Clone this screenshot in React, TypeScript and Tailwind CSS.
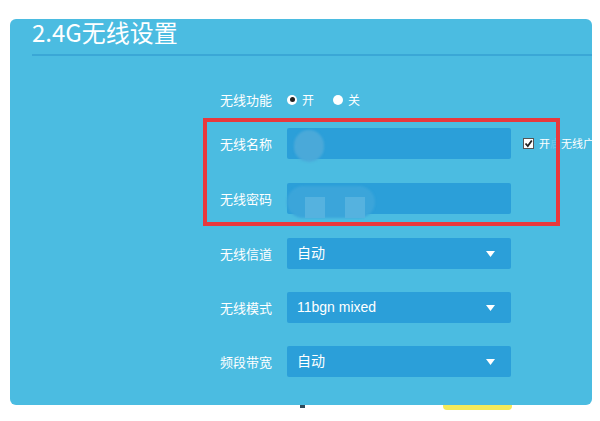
import { ReactNode } from "react"

const font = { fontFamily: '"Noto Sans CJK SC", "Noto Sans", sans-serif' }

function Row({ label, children, className = "" }: { label: string, children: ReactNode, className?: string }) {
    return (
        <div className={`flex items-center h-[31px] ${className}`}>
            <p className="w-[72px] text-right text-[13px] text-white shrink-0">{label}</p>
            <div className="ml-[15px] flex items-center">{children}</div>
        </div>
    )
}

function Select({ value }: { value: string }) {
    return (
        <div className="w-[224px] h-[31px] bg-[#2b9fd9] rounded-[2px] flex items-center justify-between pl-[10px] pr-[16px]">
            <span className="text-[14px] text-white" style={{ fontFamily: '"Liberation Sans", "Noto Sans CJK SC", sans-serif' }}>{value}</span>
            <svg width="9" height="6" viewBox="0 0 9 6"><path d="M0 0 H9 L4.5 6 Z" fill="#fff" /></svg>
        </div>
    )
}

export default function App() {
    return (
        <div className="w-[600px] h-[421px] bg-white relative overflow-hidden" style={font}>
            <div className="absolute left-[443px] top-[402px] w-[69px] h-[8px] rounded-sm bg-[#f4ea5a]"></div>
            <div className="absolute left-[300px] top-[402px] w-[5px] h-[6px] bg-[#2f4a5a]"></div>
            <div className="absolute left-[10px] top-[19px] w-[582px] h-[386px] rounded-[6px] bg-[#4bbce1]">
                <p className="ml-[22px] text-[24px] leading-[26px] text-white">2.4G无线设置</p>
                <div className="ml-[22px] mt-[9px] h-[2px] bg-[#3aa7d6]"></div>
                <div className="flex flex-col pl-[190px]">
                    <Row label="无线功能" className="mt-[28px]">
                        <div className="flex items-center gap-[5px] text-[12px] text-white">
                            <span className="w-[10px] h-[10px] rounded-full bg-white flex items-center justify-center">
                                <span className="w-[5px] h-[5px] rounded-full bg-[#222]"></span>
                            </span>
                            <span>开</span>
                            <span className="ml-[14px] w-[10px] h-[10px] rounded-full bg-white"></span>
                            <span>关</span>
                        </div>
                    </Row>
                    <Row label="无线名称" className="mt-[13px]">
                        <div className="w-[224px] h-[31px] bg-[#2b9fd9] rounded-[2px] relative">
                            <div className="absolute left-[7px] top-[2px] w-[30px] h-[32px] rounded-full bg-[#4aa9d9] blur-[1px]"></div>
                        </div>
                        <div className="ml-[12px] flex items-center gap-[5px] text-[11px] text-white whitespace-nowrap">
                            <span className="w-[11px] h-[11px] bg-white border border-[#555] flex items-center justify-center">
                                <svg width="9" height="9" viewBox="0 0 9 9"><path d="M1.5 4.5 L3.8 7 L7.8 1.5" stroke="#222" strokeWidth="1.8" fill="none" /></svg>
                            </span>
                            <span>开<span className="text-[#6fc9ea]">启</span>无线广播</span>
                        </div>
                    </Row>
                    <Row label="无线密码" className="mt-[24px]">
                        <div className="w-[224px] h-[31px] bg-[#2b9fd9] rounded-[2px] relative">
                            <div className="absolute left-[0px] top-[3px] w-[88px] h-[32px] rounded-full bg-[#3ba5da] blur-[1px]"></div>
                            <div className="absolute left-[18px] top-[14px] w-[20px] h-[21px] bg-[#55b2df]"></div>
                            <div className="absolute left-[58px] top-[14px] w-[20px] h-[21px] bg-[#55b2df]"></div>
                        </div>
                    </Row>
                    <Row label="无线信道" className="mt-[24px]">
                        <Select value="自动" />
                    </Row>
                    <Row label="无线模式" className="mt-[23px]">
                        <Select value="11bgn mixed" />
                    </Row>
                    <Row label="频段带宽" className="mt-[23px]">
                        <Select value="自动" />
                    </Row>
                </div>
            </div>
            <div className="absolute left-[203px] top-[118px] w-[357px] h-[108px] border-[4px] border-[#e8383d]"></div>
        </div>
    )
}
